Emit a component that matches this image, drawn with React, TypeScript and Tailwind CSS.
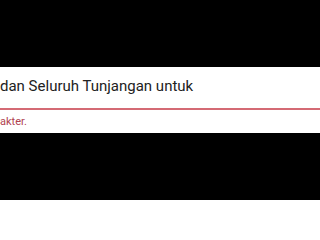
export default function App() {
  return (
    <div className="min-h-[200px] bg-black pt-[67px]" style={{ fontFamily: "Roboto, 'Liberation Sans', sans-serif" }}>
      <div className="h-[66px] overflow-hidden bg-white">
        <div className="pt-[7px] text-[15px] leading-[24px] whitespace-nowrap text-[#222222]">
          dan Seluruh Tunjangan untuk
        </div>
        <div className="mt-[10px] h-[2px] bg-[#d46a74]" />
        <div className="mt-[4px] text-[11px] leading-[16px] whitespace-nowrap text-[#b0424f]">akter.</div>
      </div>
    </div>
  );
}
